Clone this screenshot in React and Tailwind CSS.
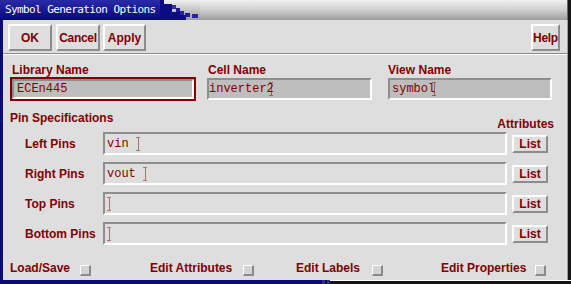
import React from "react";

const labelCls = "font-['Liberation_Sans',Arial,sans-serif] font-bold text-[12px] leading-[14px] text-[#800000] whitespace-nowrap";
const monoCls = "font-['Liberation_Mono','Courier_New',monospace] text-[12px] leading-[14px] text-[#800000] whitespace-pre";

function Cursor({ className = "" }) {
  return (
    <svg width="5" height="14" viewBox="0 0 5 14" className={"shrink-0 " + className}>
      <path d="M0.5 0.5h4M2.5 1.5v11M0.5 13.5h4" stroke="#800000" strokeWidth="1" strokeDasharray="1 1" fill="none" />
    </svg>
  );
}

function Btn({ children, className = "" }) {
  return (
    <div
      className={
        "flex items-center justify-center bg-[#dedede] border-2 border-t-white border-l-white border-r-[#8c8c8c] border-b-[#8c8c8c] " +
        labelCls +
        " " +
        className
      }
    >
      {children}
    </div>
  );
}

function Sunken({ className = "", children }) {
  return (
    <div
      className={
        "flex items-center border-2 border-t-[#8e8e8e] border-l-[#8e8e8e] border-r-white border-b-white " + className
      }
    >
      {children}
    </div>
  );
}

function Check() {
  return <div className="w-[11px] h-[11px] bg-[#d4d4d4] border border-t-white border-l-white border-r-[#8a8a8a] border-b-[#8a8a8a] border-r-2 border-b-2 shrink-0" />;
}

function PinRow({ label, value, className = "" }) {
  return (
    <div className={"flex items-center h-[23px] " + className}>
      <div className={"w-[100px] pl-[22px] " + labelCls}>{label}</div>
      <Sunken className="w-[404px] h-[23px] bg-[#dedede] pl-[2px]">
        {value ? <span className={monoCls}>{value}</span> : null}
        <Cursor />
      </Sunken>
      <Btn className="ml-[5px] w-[36px] h-[18px] mt-[1px]">List</Btn>
    </div>
  );
}

export default function App() {
  return (
    <div className="w-[571px] h-[284px] bg-[#dedede] flex flex-col overflow-hidden">
      {/* Title bar */}
      <div className="h-[20px] flex shrink-0">
        <div className="w-[160px] bg-gradient-to-b from-[#2a2aa8] to-[#06067a] flex items-center pl-[5px] text-white font-['DejaVu_Sans_Mono',monospace] text-[11px] tracking-[-0.6px] whitespace-nowrap">
          Symbol Generation Options
        </div>
        <div className="w-[40px] bg-gradient-to-b from-[#f0f0f0] to-[#9c9c9c]">
          <svg width="40" height="20" viewBox="0 0 40 20">
            <rect x="0" y="0" width="4" height="20" fill="#0c0c80" />
            <rect x="4" y="4" width="8" height="16" fill="#0c0c80" />
            <rect x="12" y="5" width="4" height="4" fill="#2e2ea6" />
            <rect x="16" y="8" width="4" height="4" fill="#1c1c90" />
            <rect x="12" y="12" width="8" height="8" fill="#0c0c80" />
            <rect x="20" y="11" width="4" height="4" fill="#2424a0" />
            <rect x="20" y="15" width="6" height="5" fill="#0c0c80" />
            <rect x="25" y="13" width="5" height="4" fill="#1c1c90" />
            <rect x="32" y="14" width="6" height="4" fill="#2424a0" />
          </svg>
        </div>
        <div className="flex-1 bg-gradient-to-b from-[#f0f0f0] via-[#d0d0d0] to-[#9c9c9c]" />
        <div className="w-[4px] flex">
          <div className="w-[1px] bg-[#6a6a6a]" />
          <div className="flex-1 bg-[#151515]" />
        </div>
      </div>

      {/* Body */}
      <div className="flex flex-1">
        <div className="w-[3px] bg-[#0a0a78]" />
        <div className="flex-1 flex flex-col">
          {/* Button row */}
          <div className="flex pt-[4px] h-[31px]">
            <Btn className="ml-[5px] w-[44px] h-[27px]">OK</Btn>
            <Btn className="ml-[4px] w-[44px] h-[27px] tracking-[-0.3px]">Cancel</Btn>
            <Btn className="ml-[3px] w-[43px] h-[27px]">Apply</Btn>
            <div className="flex-1" />
            <Btn className="mr-[7px] w-[29px] h-[27px] tracking-[-0.3px]">Help</Btn>
          </div>
          {/* separator */}
          <div className="mt-[2px] h-[1px] bg-[#8a8a8a]" />
          <div className="h-[1px] bg-white" />

          {/* Name row */}
          <div className="flex mt-[8px]">
            <div className="ml-[7px] w-[186px] flex flex-col">
              <div className={"pl-[2px] " + labelCls}>Library Name</div>
              <div className="h-[24px] border-2 border-[#800000]">
                <Sunken className="h-full bg-[#bebebe] pl-[3px]">
                  <span className={monoCls}>ECEn445</span>
                </Sunken>
              </div>
            </div>
            <div className="ml-[11px] w-[165px] flex flex-col">
              <div className={"pl-[1px] " + labelCls}>Cell Name</div>
              <Sunken className="mt-[1px] h-[22px] bg-[#bebebe] pl-[0px]">
                <span className={monoCls}>inverter2</span>
                <Cursor className="-ml-[5px]" />
              </Sunken>
            </div>
            <div className="ml-[16px] w-[164px] flex flex-col">
              <div className={labelCls}>View Name</div>
              <Sunken className="mt-[1px] h-[22px] bg-[#bebebe] pl-[2px]">
                <span className={monoCls}>symbol</span>
                <Cursor className="-ml-[3px]" />
              </Sunken>
            </div>
          </div>

          {/* Pin Specifications header */}
          <div className="flex items-start mt-[10px] h-[20px]">
            <div className={"pl-[7px] " + labelCls}>Pin Specifications</div>
            <div className="flex-1" />
            <div className={"mt-[6px] mr-[13px] " + labelCls}>Attributes</div>
          </div>

          <div className="flex flex-col mt-[1px] gap-[7px]">
            <PinRow label="Left Pins" value="vin " />
            <PinRow label="Right Pins" value="vout " />
            <PinRow label="Top Pins" value="" />
            <PinRow label="Bottom Pins" value="" />
          </div>

          {/* bottom checkboxes */}
          <div className="flex items-start mt-[16px]">
            <div className="ml-[7px] w-[140px] flex items-start">
              <span className={labelCls}>Load/Save</span>
              <div className="ml-[10px] mt-[4px]"><Check /></div>
            </div>
            <div className="w-[146px] flex items-start">
              <span className={labelCls}>Edit Attributes</span>
              <div className="ml-[11px] mt-[4px]"><Check /></div>
            </div>
            <div className="w-[145px] flex items-start">
              <span className={labelCls}>Edit Labels</span>
              <div className="ml-[12px] mt-[4px]"><Check /></div>
            </div>
            <div className="flex items-start">
              <span className={labelCls}>Edit Properties</span>
              <div className="ml-[9px] mt-[4px]"><Check /></div>
            </div>
          </div>
        </div>
        <div className="w-[4px] flex">
          <div className="w-[1px] bg-[#9a9a9a]" />
          <div className="flex-1 bg-[#151515]" />
        </div>
      </div>

      {/* bottom border */}
      <div className="h-[4px] flex shrink-0">
        <div className="w-[322px] bg-[#0a0a78]" />
        <div className="w-[8px] flex">
          <div className="w-[3px] bg-[#2a2aa0]" />
          <div className="w-[2px] bg-[#151515]" />
          <div className="w-[3px] bg-[#2a2aa0]" />
        </div>
        <div className="flex-1 flex flex-col">
          <div className="h-[1px] bg-white" />
          <div className="flex-1 bg-[#151515]" />
        </div>
      </div>
    </div>
  );
}
